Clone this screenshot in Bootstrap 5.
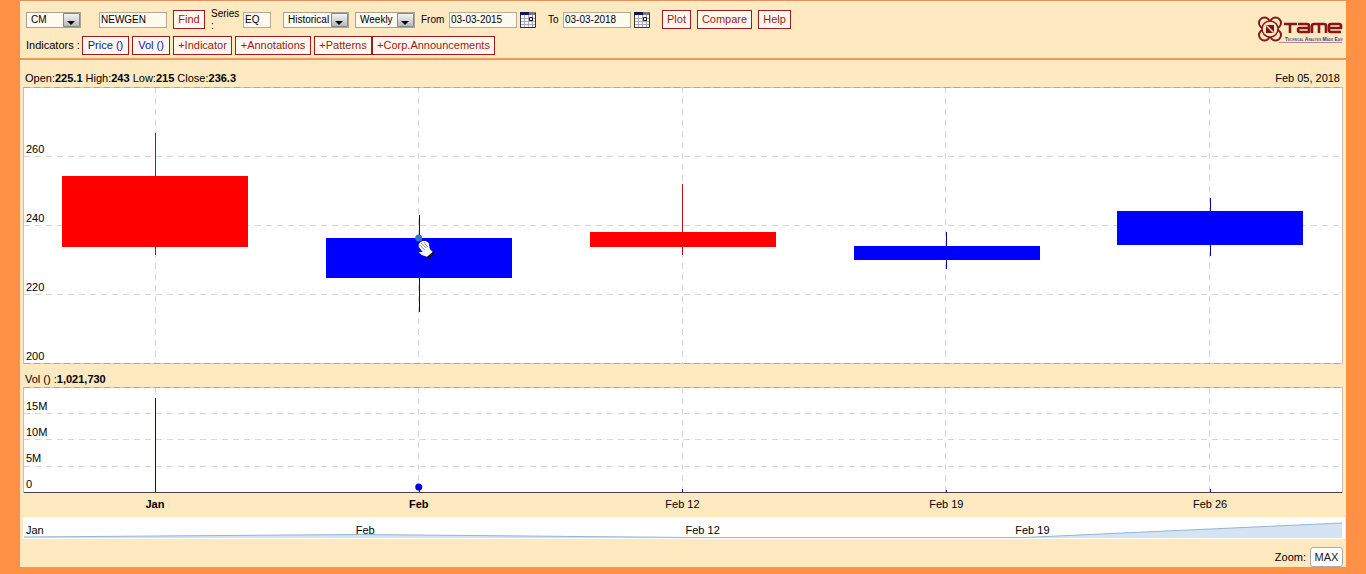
<!DOCTYPE html>
<html lang="en">
<head>
<meta charset="utf-8">
<meta name="viewport" content="width=device-width, initial-scale=1">
<title>TAME - Technical Analysis Made Easy</title>
<link href="https://cdn.jsdelivr.net/npm/bootstrap@5.3.0/dist/css/bootstrap.min.css" rel="stylesheet">
<style>
  body { background: #ff9147; color: #000; font: 11px/14px "Liberation Sans", Arial, sans-serif; }
  .sheet { background: #fee9c1; border-top: 1px solid #e0915a; margin: 0 20px 7px; }
  .toolbar { border-bottom: 2px solid #e79a5b; height: 59px; padding: 9px 3px 0 6px; }
  .tool-row { height: 19px; }
  .row-two { margin-top: 7px; }
  .tool-row label { font-size: 10px; line-height: 12px; }
  .btn-tame { --bs-btn-color: #a01818; --bs-btn-bg: #fff8ec; --bs-btn-border-color: #9e1c1c;
    --bs-btn-hover-color: #a01818; --bs-btn-hover-bg: #fff; --bs-btn-hover-border-color: #9e1c1c;
    --bs-btn-border-radius: 0; --bs-btn-padding-x: 0; --bs-btn-padding-y: 0;
    --bs-btn-font-size: 11px; --bs-btn-line-height: 17px; height: 19px; white-space: nowrap; flex: none; }
  .btn-plotted { --bs-btn-color: #1010c0; }
  .field { background-color: #fff9ee; border: 1px solid #b5ab97; border-radius: 0; color: #000; flex: none;
    font-size: 10px; line-height: 14px; height: 16px; min-height: 0; padding: 0 0 0 1px; }
  .pick { padding: 0 18px 0 4px; border-color: #a7a294; background-position: right 0 center; background-size: 17px 14px;
    background-image: url("data:image/svg+xml,%3Csvg xmlns='http://www.w3.org/2000/svg' viewBox='0 0 17 14'%3E%3Cdefs%3E%3ClinearGradient id='g' x2='0' y2='1'%3E%3Cstop stop-color='%23f6f6f6'/%3E%3Cstop offset='1' stop-color='%23b5b8b8'/%3E%3C/linearGradient%3E%3C/defs%3E%3Cpath d='M.5.5h16v13H.5z' fill='url(%23g)' stroke='%23888'/%3E%3Cpath d='M4 8h8l-4 4z'/%3E%3C/svg%3E"); }
  .w-28 { width: 28px; } .w-29 { width: 29px; } .w-32 { width: 32px; } .w-33 { width: 33px; } .w-38 { width: 38px; }
  .w-47 { width: 47px; } .w-55 { width: 55px; } .w-58 { width: 58px; } .w-59 { width: 59px; } .w-60 { width: 60px; }
  .w-66 { width: 66px; } .w-68 { width: 68px; } .w-76 { width: 76px; } .w-123 { width: 123px; }
  .gap-thin { margin-left: 3px; } .gap-mid { margin-left: 6px; } .gap-wide { margin-left: 12px; } .gap-first { margin-left: 18px; }
  .series { width: 26px; height: 24px; }
  .from-label { width: 22px; } .to-label { width: 9px; } .ind-label { width: 53px; white-space: nowrap; line-height: 19px; height: 20px; }
  .btn-cal { line-height: 0; }
  .logo { margin-top: 5px; }
  .readout { height: 27px; padding: 11px 6px 0 5px; }
  .readout-vol { height: 23px; padding: 8px 5px 0; }
  .plot { display: block; width: 100%; overflow: hidden; }
  .plot-area { margin: 0 3px; background: #fff; border-left: 1px solid #c9c1b0; border-right: 1px solid #c9c1b0; }
  .grid-line { stroke: #d6d6d6; stroke-dasharray: 6 5; }
  .edge-line { fill: #d3c6ac; } .edge-dash { stroke: #b3a68c; stroke-dasharray: 6 4; }
  .down { fill: #f00; } .up { fill: #00f; }
  .down-wick { fill: #b0101c; } .up-wick { fill: #00009c; }
  .dates { height: 24px; padding: 4px 0 0; margin: 0 4px 0 3px; }
  .dates span { width: 20%; text-align: center; }
  .range { margin: 0 1px 0 3px; height: 22px; background: #fff; padding: 0 3px 0 1px; }
  .range-labels { inset: 6px 0 auto 3px; }
  .range-labels span { width: 25%; }
  .foot { height: 28px; padding-right: 3px; gap: 4px; }
  .foot span { padding-bottom: 3px; }
  .btn-max { --bs-btn-color: #222; --bs-btn-bg: #fff; --bs-btn-border-color: #aaa; --bs-btn-border-radius: 3px;
    --bs-btn-padding-x: 0; --bs-btn-padding-y: 0; --bs-btn-font-size: 11px; --bs-btn-line-height: 18px; width: 33px; height: 20px; }
</style>
</head>
<body>
<main class="sheet">
  <header class="toolbar d-flex justify-content-between">
    <form>
      <div class="tool-row d-flex align-items-center">
        <select class="form-select field pick w-55" aria-label="Market"><option>CM</option></select>
        <input class="form-control field w-68 gap-first" type="text" value="NEWGEN" aria-label="Symbol">
        <button type="button" class="btn btn-tame w-32 gap-mid">Find</button>
        <label class="series gap-mid" for="series">Series :</label>
        <input class="form-control field w-28 gap-mid" type="text" id="series" value="EQ">
        <select class="form-select field pick w-66 gap-wide" aria-label="Data"><option>Historical</option></select>
        <select class="form-select field pick w-60 gap-mid" aria-label="Interval"><option>Weekly</option></select>
        <label class="from-label gap-mid" for="from">From</label>
        <input class="form-control field w-68 gap-mid" type="text" id="from" value="03-03-2015">
        <button type="button" class="btn-cal border-0 bg-transparent p-0 gap-thin" aria-label="Pick start date"><svg width="16" height="16"><use href="#calendar"/></svg></button>
        <label class="to-label gap-wide" for="to">To</label>
        <input class="form-control field w-68 gap-mid" type="text" id="to" value="03-03-2018">
        <button type="button" class="btn-cal border-0 bg-transparent p-0 gap-thin" aria-label="Pick end date"><svg width="16" height="16"><use href="#calendar"/></svg></button>
        <button type="button" class="btn btn-tame w-29 gap-wide">Plot</button>
        <button type="button" class="btn btn-tame w-55 gap-mid">Compare</button>
        <button type="button" class="btn btn-tame w-33 gap-mid">Help</button>
      </div>
      <div class="tool-row row-two d-flex align-items-center">
        <span class="ind-label">Indicators :</span>
        <button type="button" class="btn btn-tame btn-plotted w-47 gap-thin">Price ()</button>
        <button type="button" class="btn btn-tame btn-plotted w-38 gap-thin">Vol ()</button>
        <button type="button" class="btn btn-tame w-59 gap-thin">+Indicator</button>
        <button type="button" class="btn btn-tame w-76 gap-thin">+Annotations</button>
        <button type="button" class="btn btn-tame w-58 gap-thin">+Patterns</button>
        <button type="button" class="btn btn-tame w-123">+Corp.Announcements</button>
      </div>
    </form>
    <svg class="logo flex-shrink-0" width="86" height="29" viewBox="0 0 86 29" role="img" aria-label="TAME Technical Analysis Made Easy">
      <g fill="none" stroke="#86161a" stroke-width="2">
        <circle cx="7.500" cy="8" r="5.500"/><circle cx="18.500" cy="8" r="5.500"/><circle cx="7.500" cy="20" r="5.500"/><circle cx="18.500" cy="20" r="5.500"/>
        <circle cx="13" cy="14" r="8" fill="#fee9c1" stroke-width="1.500"/>
      </g>
      <rect x="9" y="10" width="8" height="8" fill="#7b1417"/><path d="M9.500 10.500l7 7" stroke="#fee9c1" stroke-width="1.300"/>
      <g fill="none" stroke="#86161a" stroke-width="2.600" stroke-linejoin="round">
        <path d="M27 9h13M33 9v9M41 9h9q2 0 2 2v6H43q-2 0-2-2t2-2h9M55 18v-7q0-2 2-2h10q2 0 2 2v7M62 9v9M84 17H74q-2 0-2-2v-4q0-2 2-2h8q2 0 2 2v2H73"/>
      </g>
      <path d="M22 27.500h63" stroke="#b98686"/>
      <text x="28" y="26" font-size="5" font-weight="bold" font-family="Liberation Sans, sans-serif" fill="#53539a"><tspan fill="#33338c">T</tspan><tspan font-size="3">ECHNICAL</tspan> <tspan fill="#33338c">A</tspan><tspan font-size="3">NALYSIS</tspan> <tspan fill="#33338c">M</tspan><tspan font-size="3">ADE</tspan> <tspan fill="#33338c">E</tspan><tspan font-size="3">ASY</tspan></text>
    </svg>
  </header>

  <div class="readout d-flex justify-content-between">
    <span>Open:<b>225.1</b> High:<b>243</b> Low:<b>215</b> Close:<b>236.3</b></span>
    <span>Feb 05, 2018</span>
  </div>
  <div class="plot-area">
    <svg class="plot" height="277" role="img" aria-label="Weekly price candles" font-size="11">
      <g class="grid-line" shape-rendering="crispEdges">
        <path d="M0 69.500h4000M0 138.500h4000M0 207.500h4000"/>
        <line x1="9.950%" x2="9.950%" y2="277"/><line x1="29.950%" x2="29.950%" y2="277"/><line x1="49.950%" x2="49.950%" y2="277"/><line x1="69.950%" x2="69.950%" y2="277"/><line x1="89.950%" x2="89.950%" y2="277"/>
      </g>
      <g shape-rendering="crispEdges">
        <rect class="edge-line" width="100%" height="1"/><rect class="edge-line" y="276" width="100%" height="1"/>
        <path class="edge-dash" d="M0 .5h4000M0 276.500h4000"/>
        <rect class="down-wick" x="9.950%" y="46" width="1" height="122"/><rect class="down" x="2.900%" y="89" width="14.100%" height="71"/>
        <rect class="up-wick" x="29.950%" y="128" width="1" height="97"/><rect class="up" x="22.900%" y="151" width="14.100%" height="40"/>
        <rect class="down-wick" x="49.950%" y="97" width="1" height="71"/><rect class="down" x="42.950%" y="145" width="14.100%" height="15"/>
        <rect class="up-wick" x="69.950%" y="145" width="1" height="37"/><rect class="up" x="62.950%" y="159" width="14.100%" height="14"/>
        <rect class="up-wick" x="89.950%" y="111" width="1" height="58"/><rect class="up" x="82.950%" y="124" width="14.100%" height="34"/>
      </g>
      <g><text x="2" y="66">260</text><text x="2" y="135">240</text><text x="2" y="204">220</text><text x="2" y="273">200</text></g>
      <circle cx="29.950%" cy="151" r="3.500" fill="#2f75c8"/>
      <svg x="29.950%" y="153" width="18" height="18" overflow="visible">
        <path d="M0 4L2 2L4 1L7 1L10 3L11 9L14 12L9 17L3 15L0 12L4 12L0 7z" fill="#fff"/>
        <path d="M1 5l5 5M2.500 3l5 5M5 2l4 5" stroke="#667" fill="none" stroke-width=".8"/>
        <path d="M8 17l6-5 2 1-6 6z" fill="#111"/>
      </svg>
    </svg>
  </div>
  <div class="readout-vol">Vol () :<b>1,021,730</b></div>
  <div class="plot-area">
    <svg class="plot" height="106" role="img" aria-label="Volume" font-size="11">
      <g class="grid-line" shape-rendering="crispEdges">
        <path d="M0 26.500h4000M0 52.500h4000M0 79.500h4000"/>
        <line x1="9.950%" x2="9.950%" y2="105"/><line x1="29.950%" x2="29.950%" y2="105"/><line x1="49.950%" x2="49.950%" y2="105"/><line x1="69.950%" x2="69.950%" y2="105"/><line x1="89.950%" x2="89.950%" y2="105"/>
      </g>
      <g shape-rendering="crispEdges">
        <rect class="edge-line" width="100%" height="1"/><path class="edge-dash" d="M0 .5h4000"/>
        <g class="up-wick">
          <rect x="9.950%" y="11" width="1" height="94"/><rect x="29.950%" y="100" width="1" height="5"/><rect x="49.950%" y="102" width="1" height="3"/><rect x="69.950%" y="103" width="1" height="2"/><rect x="89.950%" y="102" width="1" height="3"/>
        </g>
        <rect y="105" width="100%" height="1" fill="#444"/>
      </g>
      <circle cx="29.950%" cy="100" r="3.500" fill="#0000d8"/>
      <text x="2" y="23">15M</text><text x="2" y="49">10M</text><text x="2" y="75">5M</text><text x="2" y="101">0</text>
    </svg>
  </div>
  <div class="dates d-flex"><span class="fw-bold">Jan</span><span class="fw-bold">Feb</span><span>Feb 12</span><span>Feb 19</span><span>Feb 26</span></div>
  <div class="range position-relative">
    <svg class="plot" height="22" viewBox="0 0 1318 22" preserveAspectRatio="none" aria-hidden="true">
      <path d="M0 20L335 17.500L665 20.500L1000 20.500L1318 6V21H0z" fill="#d5e3f3"/>
      <path d="M0 20L335 17.500L665 20.500L1000 20.500L1318 6" fill="none" stroke="#93b5d6"/>
    </svg>
    <div class="range-labels position-absolute d-flex"><span>Jan</span><span>Feb</span><span>Feb 12</span><span>Feb 19</span></div>
  </div>
  <div class="foot d-flex justify-content-end align-items-end">
    <span>Zoom:</span><button type="button" class="btn btn-max">MAX</button>
  </div>
</main>

<svg width="0" height="0" class="d-none" aria-hidden="true">
  <symbol id="calendar" viewBox="0 0 16 16">
    <path d="M0 0h16v16H0z" fill="#f8f6f8"/>
    <path d="M4.500 2v13M8.500 2v13M12.500 2v13M1 6.500h14M1 9.500h14M1 12.500h14" stroke="#a9a9bb"/>
    <path d="M0 0h9v3H0z" fill="#14145c"/><path d="M9 0h7v3H9z" fill="#77777f"/>
    <path d="M.5 3v12.500M15.500 1v14.500H0" fill="none" stroke="#333"/>
    <path d="M9.500 5.500h3v3h-3z" fill="#fff" stroke="#111"/>
  </symbol>
</svg>
<script src="https://cdn.jsdelivr.net/npm/bootstrap@5.3.0/dist/js/bootstrap.bundle.min.js"></script>
</body>
</html>
